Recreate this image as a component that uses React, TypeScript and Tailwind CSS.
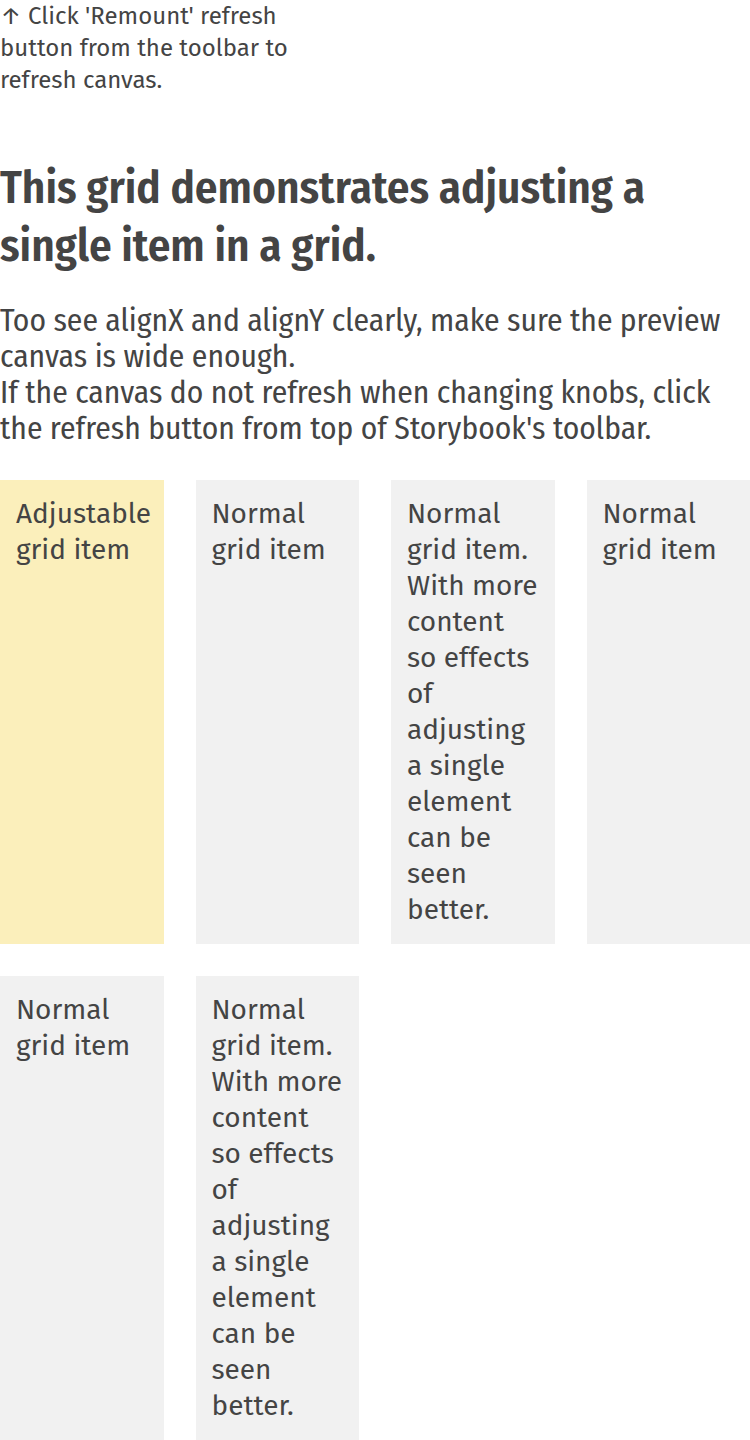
const items = [
  { text: 'Adjustable grid item', adjustable: true },
  { text: 'Normal grid item' },
  { text: 'Normal grid item. With more content so effects of adjusting a single element can be seen better.' },
  { text: 'Normal grid item' },
  { text: 'Normal grid item' },
  { text: 'Normal grid item. With more content so effects of adjusting a single element can be seen better.' },
];

export default function App() {
  return (
    <div className="min-h-[1440px] bg-white text-[#444444] font-['Fira_Sans','Noto_Sans',sans-serif]">
      <p className="w-[300px] text-[24px] leading-[32px]">↑ Click 'Remount' refresh button from the toolbar to refresh canvas.</p>

      <h2 className="mt-[63px] text-[45px] leading-[58px] font-semibold font-['Fira_Sans_Condensed','DejaVu_Sans_Condensed',sans-serif]">
        This grid demonstrates adjusting a single item in a grid.
      </h2>
      <div className="mt-[28px] text-[31.5px] leading-[36px] font-['Fira_Sans_Condensed','DejaVu_Sans_Condensed',sans-serif]">
        <p>Too see alignX and alignY clearly, make sure the preview canvas is wide enough.</p>
        <p>If the canvas do not refresh when changing knobs, click the refresh button from top of Storybook's toolbar.</p>
      </div>

      <div className="mt-[33px] grid grid-cols-4 gap-8">
        {items.map((item, i) => (
          <div
            key={i}
            className={`p-4 text-[28px] leading-[36px] ${item.adjustable ? 'bg-[#fbefbb]' : 'bg-[#f1f1f1]'}`}
          >
            {item.text}
          </div>
        ))}
      </div>
    </div>
  );
}
